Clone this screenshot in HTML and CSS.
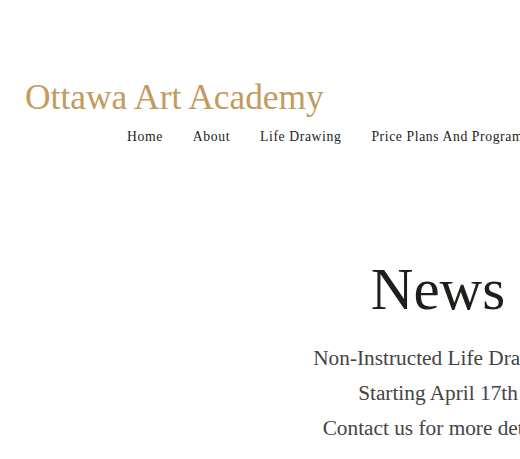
FILE: index.html
```html
<!DOCTYPE html>
<html>
<head>
<meta charset="utf-8">
<link rel="stylesheet" href="styles.css">
</head>
<body>
<div class="page">
  <header class="header">
    <div class="brand">Ottawa Art Academy</div>
    <nav class="nav">
      <a class="nav-item">Home</a>
      <a class="nav-item">About</a>
      <a class="nav-item">Life Drawing</a>
      <a class="nav-item">Price Plans And Programs</a>
      <a class="nav-item">Contact</a>
    </nav>
  </header>
  <main class="main">
    <h1 class="title">News</h1>
    <p class="line">Non-Instructed Life Drawing</p>
    <p class="line">Starting April 17th</p>
    <p class="line">Contact us for more details</p>
  </main>
</div>
</body>
</html>
```
FILE: styles.css
```css
html, body {
  margin: 0;
  padding: 0;
  background: #ffffff;
}
.page {
  width: 876px;
  font-family: "Liberation Serif", "DejaVu Serif", serif;
}
.header {
  padding-top: 77px;
  padding-left: 25px;
}
.brand {
  font-size: 35.4px;
  line-height: 40px;
  color: #c29b5e;
}
.nav {
  display: flex;
  gap: 30px;
  margin-top: 11px;
  padding-left: 102px;
}
.nav-item {
  font-size: 13.7px;
  letter-spacing: 0.6px;
  color: #222222;
  line-height: 18px;
  white-space: nowrap;
}
.main {
  text-align: center;
  padding-top: 111px;
}
.title {
  font-size: 59px;
  font-weight: normal;
  line-height: 64px;
  margin: 0 0 20px 0;
  color: #1e1e1a;
}
.line {
  font-size: 21.3px;
  line-height: 35px;
  margin: 0;
  color: #444444;
}
```
